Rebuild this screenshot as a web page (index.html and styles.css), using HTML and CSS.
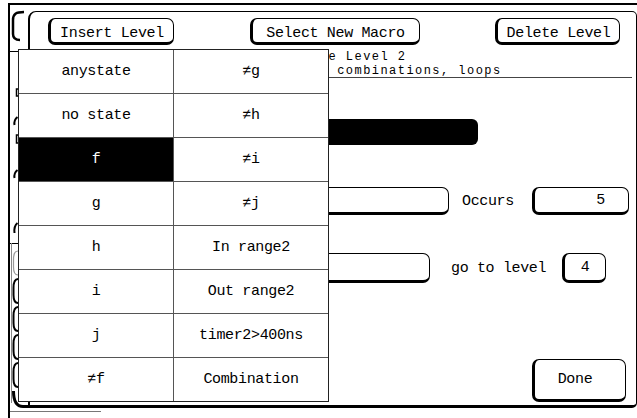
FILE: index.html
```html
<!DOCTYPE html>
<html lang="en">
<head>
    <meta charset="UTF-8">
    <meta name="viewport" content="width=device-width, initial-scale=1.0">
    <title>Sequence Level 2</title>
    <link rel="stylesheet" href="styles.css">
</head>
<body>
    <div class="screen">
        <div class="frame">
            <div class="main-row">
                <!-- edges of the sequence window behind the dialog -->
                <svg class="strip" width="18" height="403" viewBox="0 0 18 403">
                    <g fill="none" stroke="#000">
                        <path d="M14 7C6 7 3 9 3 15V29C3 33 5 35 10 35" stroke-width="2.5"/>
                        <path d="M0 46.5H8"/>
                        <path d="M8 84H6.5V91H8" stroke-width="1.5"/>
                        <path d="M7.5 112C5 114 4 117 4.5 120" stroke-width="2"/>
                        <path d="M8 130H6.5V138H8" stroke-width="1.5"/>
                        <path d="M7.5 165C5 167 4 170 4.5 173" stroke-width="2"/>
                        <path d="M7.5 218C5 220 4 224 4.5 228" stroke-width="2"/>
                        <path d="M0 238.5H8"/>
                        <path d="M1.5 238V398" stroke="#888"/>
                        <path d="M8 246C4.5 246 3.5 249 3.5 255V262C3.5 267 5 270 8 270" stroke="#999" stroke-width="1.2"/>
                        <path d="M8 274C4.5 274 3.5 277 3.5 283V290C3.5 295 5 298 8 298" stroke-width="2"/>
                        <path d="M8 302C4.5 302 3.5 305 3.5 311V318C3.5 323 5 326 8 326" stroke-width="2"/>
                        <path d="M8 330C4.5 330 3.5 333 3.5 339V346C3.5 351 5 354 8 354" stroke-width="2"/>
                        <path d="M8 358C4.5 358 3.5 361 3.5 367V374C3.5 379 5 382 8 382" stroke-width="2"/>
                        <path d="M3.5 386C3.5 396 7 401.5 13 401.5H18" stroke-width="3"/>
                    </g>
                </svg>

                <section class="dialog">
                    <div class="actions">
                        <button class="btn btn-insert">Insert Level</button>
                        <button class="btn btn-macro">Select New Macro</button>
                        <button class="btn btn-delete">Delete Level</button>
                    </div>

                    <div class="level-info">
                        <div>Sequence Level 2</div>
                        <div>States, combinations, loops</div>
                    </div>
                    <div class="rule"></div>

                    <div class="selected-bar"></div>

                    <div class="field-row row-occurs">
                        <div class="field field-occurs"></div>
                        <span class="label label-occurs">Occurs</span>
                        <div class="field field-count">5</div>
                    </div>

                    <div class="field-row row-goto">
                        <div class="field field-goto"></div>
                        <span class="label label-goto">go to level</span>
                        <div class="field field-level">4</div>
                    </div>

                    <div class="footer">
                        <button class="btn btn-done">Done</button>
                    </div>
                </section>
            </div>
            <div class="foot-line"></div>
        </div>

        <div class="menu">
            <div class="menu-item">anystate</div>
            <div class="menu-item">≠g</div>
            <div class="menu-item">no state</div>
            <div class="menu-item">≠h</div>
            <div class="menu-item active">f</div>
            <div class="menu-item">≠i</div>
            <div class="menu-item">g</div>
            <div class="menu-item">≠j</div>
            <div class="menu-item">h</div>
            <div class="menu-item">In range2</div>
            <div class="menu-item">i</div>
            <div class="menu-item">Out range2</div>
            <div class="menu-item">j</div>
            <div class="menu-item">timer2&gt;400ns</div>
            <div class="menu-item">≠f</div>
            <div class="menu-item">Combination</div>
        </div>
    </div>
</body>
</html>
```

FILE: styles.css
```css
/* Base */
* {
    box-sizing: border-box;
}

body {
    margin: 0;
    background: #fff;
    color: #000;
    font-family: 'Liberation Mono', 'DejaVu Sans Mono', monospace;
    font-size: 15px;
    letter-spacing: -0.35px;
    line-height: 15px;
}

.screen {
    position: relative;
    width: 637px;
    height: 418px;
    padding: 3px 0 0 8px;
    overflow: hidden;
}

.frame {
    height: 415px;
    border-top: 2px solid #000;
    border-left: 2px solid #000;
}

.main-row {
    display: flex;
}

.strip {
    flex: none;
    display: block;
}

.foot-line {
    width: 91px;
    margin-top: 3px;
    border-top: 1px solid #777;
}

/* Dialog */
.dialog {
    flex: none;
    width: 609px;
    height: 397px;
    margin-top: 6px;
    padding: 6px 10px 3px 18px;
    border: 1px solid #000;
    border-left-width: 2px;
    border-bottom-width: 3px;
    border-radius: 8px 5px 5px 0;
    display: flex;
    flex-direction: column;
}

.btn {
    font: inherit;
    letter-spacing: inherit;
    line-height: 15px;
    color: #000;
    background: #fff;
    border: 1px solid #000;
    border-left-width: 3px;
    border-bottom-width: 3px;
    border-radius: 7px;
    text-align: center;
    padding: 7px 0 1px;
    height: 27px;
    flex: none;
}

.actions {
    display: flex;
    justify-content: space-between;
    margin-right: 6px;
}

.btn-insert {
    width: 126px;
}

.btn-macro {
    width: 170px;
}

.btn-delete {
    width: 125px;
}

/* the help text uses a shorter face on the same character grid */
.level-info {
    flex: none;
    height: 32px;
    margin-left: 220px;
    padding-top: 5px;
    font-size: 12px;
    letter-spacing: 1.45px;
    line-height: 14px;
    white-space: nowrap;
}

.rule {
    margin-right: -6px;
    border-top: 1px solid #444;
}

.selected-bar {
    width: 278px;
    height: 26px;
    margin: 41px 0 0 152px;
    background: #000;
    border-radius: 0 6px 6px 0;
}

/* Fields */
.field-row {
    display: flex;
    align-items: center;
}

.row-occurs {
    margin-top: 42px;
}

.row-goto {
    margin-top: 38px;
}

.field {
    flex: none;
    border: 1px solid #000;
    border-left-width: 3px;
    border-bottom-width: 3px;
    border-radius: 7px;
}

.field-occurs {
    width: 249px;
    height: 28px;
    margin-left: 152px;
}

.field-goto {
    width: 230px;
    height: 30px;
    margin-left: 152px;
}

.label {
    flex: none;
    white-space: nowrap;
}

.label-occurs {
    margin-left: 13px;
}

.label-goto {
    margin-left: 21px;
}

.field-count {
    width: 97px;
    height: 28px;
    margin-left: 18px;
    padding-right: 23px;
    line-height: 26px;
    text-align: right;
}

.field-level {
    width: 44px;
    height: 30px;
    margin-left: 16px;
    line-height: 28px;
    text-align: center;
}

.footer {
    display: flex;
    justify-content: flex-end;
    margin-top: 76px;
}

.btn-done {
    width: 94px;
    height: 43px;
    padding: 0 10px 0 0;
    line-height: 39px;
}

/* Popup menu */
.menu {
    position: absolute;
    left: 18px;
    top: 49px;
    display: grid;
    grid-template-columns: 154px 154px;
    grid-auto-rows: 43px;
    gap: 1px;
    background: #555;
    border: 1px solid #222;
}

.menu-item {
    background: #fff;
    display: flex;
    align-items: center;
    justify-content: center;
    white-space: nowrap;
}

.menu-item.active {
    background: #000;
    color: #fff;
}
```
